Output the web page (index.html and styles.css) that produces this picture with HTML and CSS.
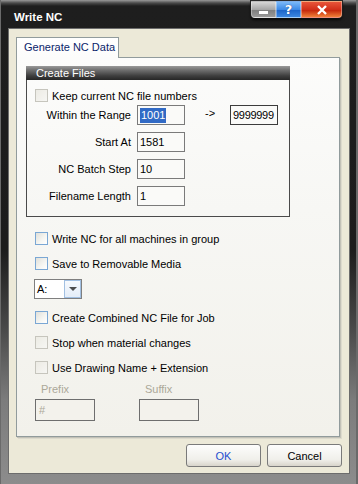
FILE: index.html
```html
<!DOCTYPE html>
<html lang="en">
<head>
  <meta charset="UTF-8">
  <title>Write NC</title>
  <link rel="stylesheet" href="styles.css">
</head>
<body>
  <div class="window">
    <div class="titlebar">
      <span class="title">Write NC</span>
      <div class="caption">
        <span class="cap cap-min"><i></i></span>
        <span class="cap cap-help">?</span>
        <span class="cap cap-close">
          <svg width="12" height="10" viewBox="0 0 12 10"><path d="M2 1 L10 9 M10 1 L2 9" stroke="#fff" stroke-width="2.4" fill="none"/></svg>
        </span>
      </div>
    </div>

    <div class="client">
      <div class="tabs">
        <div class="tab">Generate NC Data</div>
      </div>

      <div class="panel">
        <div class="group">
          <div class="group-title">Create Files</div>
          <label class="check disabled first"><span class="box"></span>Keep current NC file numbers</label>

          <div class="field first">
            <span class="field-label">Within the Range</span>
            <span class="edit"><span class="sel">1001</span></span>
            <span class="arrow">-&gt;</span>
            <span class="edit dark">9999999</span>
          </div>
          <div class="field">
            <span class="field-label">Start At</span>
            <span class="edit">1581</span>
          </div>
          <div class="field">
            <span class="field-label">NC Batch Step</span>
            <span class="edit">10</span>
          </div>
          <div class="field">
            <span class="field-label">Filename Length</span>
            <span class="edit">1</span>
          </div>
        </div>

        <label class="check outer write-all"><span class="box"></span>Write NC for all machines in group</label>
        <label class="check outer"><span class="box"></span>Save to Removable Media</label>

        <div class="combo">
          <span class="combo-text">A:</span>
          <span class="combo-btn"><i></i></span>
        </div>

        <label class="check outer combined"><span class="box"></span>Create Combined NC File for Job</label>
        <label class="check outer disabled"><span class="box"></span>Stop when material changes</label>
        <label class="check outer disabled"><span class="box"></span>Use Drawing Name + Extension</label>

        <div class="affix">
          <div class="affix-col">
            <span class="affix-label">Prefix</span>
            <span class="affix-edit">#</span>
          </div>
          <div class="affix-col">
            <span class="affix-label">Suffix</span>
            <span class="affix-edit"></span>
          </div>
        </div>
      </div>

      <div class="buttons">
        <button class="btn default">OK</button>
        <button class="btn">Cancel</button>
      </div>
    </div>
  </div>
</body>
</html>
```

FILE: styles.css
```css
body {
  margin: 0;
  font-family: "Liberation Sans", Arial, sans-serif;
  font-size: 11px;
  color: #000;
  background: #1c1c1c;
}
.window {
  width: 358px;
  height: 484px;
  box-sizing: border-box;
  padding: 0 8px 10px 8px;
  display: flex;
  flex-direction: column;
  background: linear-gradient(to bottom, #9a9a9a 0, #4a4a4a 3px, #1e1e1e 6px, #1c1c1c 250px, #4a4a4a 330px, #7c7c7c 400px, #8c8c8c 100%);
  box-shadow: inset 1px 0 0 #6a6a6a, inset -2px 0 0 #6a6a6a;
}
.titlebar {
  height: 28px;
  margin: 0 -8px;
  padding-left: 14px;
  display: flex;
  align-items: flex-start;
}
.title {
  color: #fff;
  font-weight: bold;
  font-size: 11.5px;
  line-height: 14px;
  margin-top: 10px;
}
.caption {
  margin-left: auto;
  margin-right: 16px;
  margin-top: 1px;
  display: flex;
  height: 17px;
  border-radius: 0 0 4px 4px;
  box-shadow: 0 2px 3px rgba(0, 0, 0, 0.8), 0 0 0 1px #2a2a2a;
}
.cap {
  width: 25px;
  height: 17px;
  box-sizing: border-box;
  display: flex;
  align-items: center;
  justify-content: center;
  border: 1px solid rgba(255, 255, 255, 0.35);
  color: #fff;
  font-family: "DejaVu Sans", sans-serif;
  font-weight: bold;
  font-size: 13px;
}
.cap-min {
  background: linear-gradient(#d6d6d6, #a6a6a6 50%, #7c7c7c 51%, #9a9a9a);
  border-radius: 0 0 0 4px;
}
.cap-min i {
  width: 9px;
  height: 3px;
  margin-top: 5px;
  background: #fff;
}
.cap-help {
  background: linear-gradient(#7ab8f8, #3d8ae6 50%, #1a62c8 51%, #3b86e0);
  text-shadow: 0 0 1px #0a2a6a;
}
.cap-close {
  width: 41px;
  background: linear-gradient(#e8553a, #d2301a 50%, #c21f08 51%, #f08038);
  border-radius: 0 0 4px 0;
}
.client {
  flex: 1;
  border: 1px solid #6c6c6c;
  background: #ece9d8;
  padding: 8px 7px 0 7px;
  display: flex;
  flex-direction: column;
}
.tabs {
  display: flex;
  height: 21px;
  margin-bottom: -1px;
  position: relative;
  z-index: 1;
}
.tab {
  box-sizing: border-box;
  width: 103px;
  height: 21px;
  padding-left: 7px;
  line-height: 19px;
  border: 1px solid #919b9c;
  border-bottom: none;
  background: linear-gradient(#ffffff, #fcfcfb);
  color: #0a246a;
}
.panel {
  width: 324px;
  height: 380px;
  box-sizing: border-box;
  border: 1px solid #919b9c;
  background: linear-gradient(#fcfcfb, #f7f7f4 40%, #f2f1eb);
  box-shadow: 1px 1px 0 #c2c1b7, 2px 2px 0 #dcdacd;
  padding: 8px 0 0 9px;
}
.group {
  width: 264px;
  box-sizing: border-box;
  border: 1px solid #4a4a4a;
  border-top: none;
  padding-bottom: 10px;
}
.group-title {
  height: 14px;
  margin: 0 -1px;
  padding-left: 10px;
  line-height: 14px;
  color: #fff;
  background: linear-gradient(#9a9a9a, #6e6e6e 30%, #3e3e3e 70%, #262626);
}
.check {
  display: flex;
  align-items: center;
  height: 13px;
  gap: 4px;
}
.check .box {
  width: 13px;
  height: 13px;
  box-sizing: border-box;
  border: 1px solid #7aa7d4;
  background: linear-gradient(135deg, #e0e0da, #f6f6f2 60%, #ffffff);
}
.check.disabled .box {
  border-color: #c6c5bd;
  background: linear-gradient(135deg, #ecebe4, #f6f6f3);
}
.check.first {
  margin: 9px 0 0 8px;
}
.field {
  display: flex;
  align-items: center;
  margin-top: 7px;
}
.field.first {
  margin-top: 3px;
}
.field-label {
  width: 104px;
  margin-right: 6px;
  text-align: right;
}
.edit {
  width: 48px;
  height: 20px;
  box-sizing: border-box;
  border: 1px solid #7a7a7a;
  background: #fafaf8;
  padding-left: 2px;
  line-height: 18px;
  white-space: nowrap;
  overflow: hidden;
}
.edit.dark {
  border-color: #3c3c3c;
  padding-left: 2px;
  letter-spacing: -0.3px;
}
.sel {
  background: #316ac5;
  color: #fff;
  padding: 1px 1px 2px 1px;
}
.arrow {
  width: 12px;
  margin: -4px 13px 0 20px;
}
.check.outer {
  margin-left: 9px;
  margin-top: 12px;
}
.check.write-all {
  margin-top: 15px;
}
.combo {
  width: 48px;
  height: 20px;
  box-sizing: border-box;
  margin: 9px 0 0 8px;
  border: 1px solid #7f7f7f;
  background: #fff;
  display: flex;
}
.combo-text {
  flex: 1;
  padding-left: 2px;
  line-height: 18px;
}
.combo-btn {
  width: 17px;
  box-sizing: border-box;
  border: 1px solid #a2c0e2;
  background: linear-gradient(#f6f9fd, #e4edf8);
  display: flex;
  align-items: center;
  justify-content: center;
}
.combo-btn i {
  width: 0;
  height: 0;
  border-left: 4px solid transparent;
  border-right: 4px solid transparent;
  border-top: 4px solid #4d4d4d;
}
.check.combined {
  margin-top: 12px;
}
.affix {
  display: flex;
  gap: 44px;
  margin: 9px 0 0 9px;
}
.affix-col {
  width: 60px;
  display: flex;
  flex-direction: column;
  gap: 3px;
}
.affix-label {
  padding-left: 6px;
  line-height: 13px;
  color: #aca899;
}
.affix-edit {
  height: 22px;
  box-sizing: border-box;
  border: 1px solid #6e6e6e;
  background: #f3f2ec;
  color: #aca899;
  padding-left: 3px;
  line-height: 20px;
}
.buttons {
  display: flex;
  justify-content: flex-end;
  gap: 6px;
  margin-top: 7px;
}
.btn {
  width: 75px;
  height: 23px;
  font-family: inherit;
  font-size: 11px;
  border: 1px solid #7a7a7a;
  border-radius: 3px;
  background: linear-gradient(#fdfdfc, #f0efea 70%, #d8d4cb);
  color: #000;
  padding: 0;
}
.btn.default {
  color: #1f4fcf;
}
```
